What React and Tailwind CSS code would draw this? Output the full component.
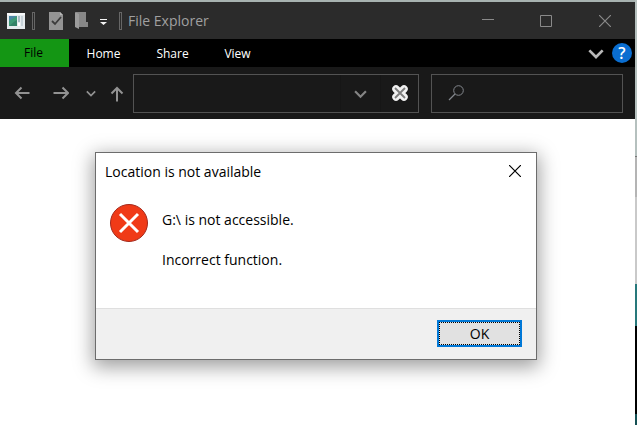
import React, { useState } from 'react';

const tabs = [
  { name: 'Home', width: 'w-[69px]' },
  { name: 'Share', width: 'w-[69px]' },
  { name: 'View', width: 'w-[61px]' },
];

const WindowIcon = () => (
  <svg width="18" height="16" viewBox="0 0 18 16">
    <rect width="18" height="16" fill="#e6ebee" />
    <rect width="18" height="2" fill="#f8fafb" />
    <rect x="2" y="3" width="8" height="10" fill="#4b87a5" />
    <path d="M2 8l8-5v10H2z" fill="#3f9a76" />
    <path d="M2 13c2-1 5-5 8-6v6z" fill="#348267" />
    <rect x="11" y="3" width="2" height="6" fill="#a9bcc6" />
    <rect x="14" y="3" width="2" height="10" fill="#c7d3d9" />
    <rect x="11" y="10" width="2" height="3" fill="#fff" />
  </svg>
);

const PropertiesIcon = () => (
  <svg width="14" height="18" viewBox="0 0 14 18">
    <path d="M0 0h11l3 3v15H0z" fill="#949494" />
    <path d="M11 0v3h3z" fill="#b8b8b8" />
    <path d="M3 9l3 3 6-7" fill="none" stroke="#3c3c3c" strokeWidth="1.800" />
  </svg>
);

const NewFolderIcon = () => (
  <svg width="13" height="17" viewBox="0 0 13 17">
    <path d="M1 0h10v10h2v5H1z" fill="#878787" />
    <path d="M0 0l4 2v15l-4-2z" fill="#9c9c9c" />
  </svg>
);

const CustomizeIcon = () => (
  <svg width="7" height="6" viewBox="0 0 7 6">
    <path d="M0 0h7v1H0zM0 3h7L3.500 6z" fill="#f4f4f4" />
  </svg>
);

const Grip = () => <span className="block w-[3px] h-[18px] border border-[#666]" />;

const Chevron = ({ size, color, weight }) => (
  <svg width={size} height={size} viewBox="0 0 12 12">
    <path d="M1 4l5 5 5-5" fill="none" stroke={color} strokeWidth={weight} />
  </svg>
);

const Arrow = ({ path }) => (
  <svg width="16" height="16" viewBox="0 0 16 16">
    <path d={path} fill="none" stroke="#929292" strokeWidth="2" />
  </svg>
);

const StopIcon = () => (
  <svg width="16" height="16" viewBox="0 0 16 16">
    <path d="M4 4l8 8M12 4l-8 8" stroke="#f1f1f1" strokeWidth="7.500" strokeLinecap="round" />
    <path d="M3 3l10 10M13 3L3 13" stroke="#7c7c7c" strokeWidth="1.800" />
  </svg>
);

const SearchIcon = () => (
  <svg width="16" height="16" viewBox="0 0 16 16">
    <circle cx="10.500" cy="5.500" r="4.800" fill="none" stroke="#83878d" />
    <path d="M7 9l-6 6" stroke="#83878d" strokeWidth="1.200" />
  </svg>
);

const ErrorIcon = () => (
  <svg width="38" height="38" viewBox="0 0 38 38">
    <circle cx="19" cy="19" r="18.500" fill="#f03a17" stroke="#a3281b" />
    <path d="M10 10l18 18M28 10L10 28" stroke="#fff" strokeWidth="3" />
  </svg>
);

const TitleBar = () => (
  <header className="flex items-center h-[37px] bg-[#2b2b2b]">
    <div className="flex items-center flex-1 pl-[7px]">
      <WindowIcon />
      <div className="ml-[7px]"><Grip /></div>
      <button aria-label="Properties" className="ml-[14px]"><PropertiesIcon /></button>
      <button aria-label="New folder" className="ml-3"><NewFolderIcon /></button>
      <button aria-label="Customize toolbar" className="ml-3 pt-[3px]"><CustomizeIcon /></button>
      <div className="ml-3"><Grip /></div>
      <h1 className="ml-[6px] text-sm text-[#a0a0a0] whitespace-nowrap">File Explorer</h1>
    </div>
    <button aria-label="Minimize" className="flex justify-center w-[58px]">
      <svg width="13" height="13" viewBox="0 0 13 13"><path d="M0 5.500h12" stroke="#8a8a8a" /></svg>
    </button>
    <button aria-label="Maximize" className="flex justify-center w-[58px]">
      <svg width="12" height="12" viewBox="0 0 12 12"><path d="M.5.5h11v11H.5z" fill="none" stroke="#8a8a8a" /></svg>
    </button>
    <button aria-label="Close" className="flex justify-center w-[60px]">
      <svg width="12" height="12" viewBox="0 0 12 12"><path d="M0 0l12 12M12 0L0 12" stroke="#8a8a8a" strokeWidth="1.200" /></svg>
    </button>
  </header>
);

const Ribbon = () => (
  <nav className="flex items-center h-7 bg-black text-xs text-white">
    <button className="w-[69px] h-full pr-[2px] bg-[#149614] text-black">File</button>
    {tabs.map((tab) => (
      <button key={tab.name} className={`h-full pt-px ${tab.width}`}>{tab.name}</button>
    ))}
    <button aria-label="Expand ribbon" className="ml-auto">
      <Chevron size={16} color="#b9b9b9" weight="2" />
    </button>
    <button
      aria-label="Help"
      className="flex items-center justify-center w-5 h-5 ml-2 mr-[3px] rounded-full bg-[#0a6ed1] text-base font-semibold"
    >
      ?
    </button>
  </nav>
);

const AddressBar = () => (
  <div className="flex items-center h-[52px] pr-3 bg-[#191919]">
    <div className="flex items-center w-[133px] shrink-0 pl-[14px]">
      <button aria-label="Back"><Arrow path="M15.500 8H2M7.500 2.500L2 8l5.500 5.500" /></button>
      <button aria-label="Forward" className="ml-[23px]"><Arrow path="M.5 8H15M9.500 2.500L15 8l-5.500 5.500" /></button>
      <button aria-label="Recent locations" className="ml-[17px]">
        <Chevron size={10} color="#929292" weight="2" />
      </button>
      <button aria-label="Up" className="ml-[13px] pt-px"><Arrow path="M8 15.500V2M2.500 7.500L8 2l5.500 5.500" /></button>
    </div>
    <div className="flex flex-1 min-w-0 h-[39px] border border-[#535353] text-sm text-white">
      <input aria-label="Address" className="flex-1 min-w-0 px-2 outline-none" />
      <button aria-label="Previous locations" className="flex items-center justify-center w-10 border-l border-[#161616]">
        <Chevron size={13} color="#858585" weight="2" />
      </button>
      <button aria-label="Stop" className="flex items-center justify-center w-[38px] border-l border-[#161616]">
        <StopIcon />
      </button>
    </div>
    <label className="flex items-center w-48 h-[39px] ml-3 pl-4 border border-[#535353] text-sm text-white">
      <SearchIcon />
      <input aria-label="Search" className="flex-1 min-w-0 px-2 outline-none" />
    </label>
  </div>
);

const ErrorDialog = ({ onClose }) => (
  <section
    role="alertdialog"
    aria-labelledby="dialog-title"
    aria-describedby="dialog-message"
    className="w-[442px] bg-white border border-[#6c6c6c] text-sm text-black shadow-[0_5px_18px_2px_rgba(0,0,0,0.38)]"
  >
    <div className="flex items-center justify-between h-9 pl-[9px] pr-[15px]">
      <h2 id="dialog-title" className="pt-[2px]">Location is not available</h2>
      <button aria-label="Close dialog" onClick={onClose}>
        <svg width="12" height="12" viewBox="0 0 12 12"><path d="M0 0l12 12M12 0L0 12" stroke="#000" strokeWidth="1.200" /></svg>
      </button>
    </div>
    <div className="flex gap-[14px] pt-[15px] px-[14px] pb-[38px]">
      <ErrorIcon />
      <div id="dialog-message" className="space-y-5 pt-[6px] leading-5">
        <p>G:\ is not accessible.</p>
        <p>Incorrect function.</p>
      </div>
    </div>
    <div className="flex justify-end pt-[11px] pr-[14px] pb-3 border-t border-[#dfdfdf] bg-[#f0f0f0]">
      <button onClick={onClose} className="w-[85px] h-[27px] border-2 border-[#0078d7] bg-[#e1e1e1]">
        <span className="flex items-center justify-center w-full h-full border border-dotted border-black">OK</span>
      </button>
    </div>
  </section>
);

const App = () => {
  const [open, setOpen] = useState(true);

  return (
    <div className="flex min-h-screen bg-white font-['Open_Sans','Noto_Sans',sans-serif]">
      <div className="flex-1 min-w-0 border-t-2 border-[#a7b2b0]">
        <TitleBar />
        <Ribbon />
        <AddressBar />
        <main className="flex justify-center pt-[33px] pr-[3px] pb-16">
          {open && <ErrorDialog onClose={() => setOpen(false)} />}
        </main>
      </div>

      {/* Sliver of the desktop behind the window */}
      <div className="flex flex-col w-[2px] bg-black">
        <div className="h-[156px] bg-[#b5c0be]" />
        <div className="h-px bg-[#777]" />
        <div className="h-10 bg-[#b4b4b4]" />
        <div className="h-[87px] bg-[#c9c9c9]" />
        <div className="h-[42px] bg-[#26787b]" />
        <div className="flex-1 bg-black" />
        <div className="h-[11px] bg-[#145054]" />
      </div>
    </div>
  );
};

export default App;
